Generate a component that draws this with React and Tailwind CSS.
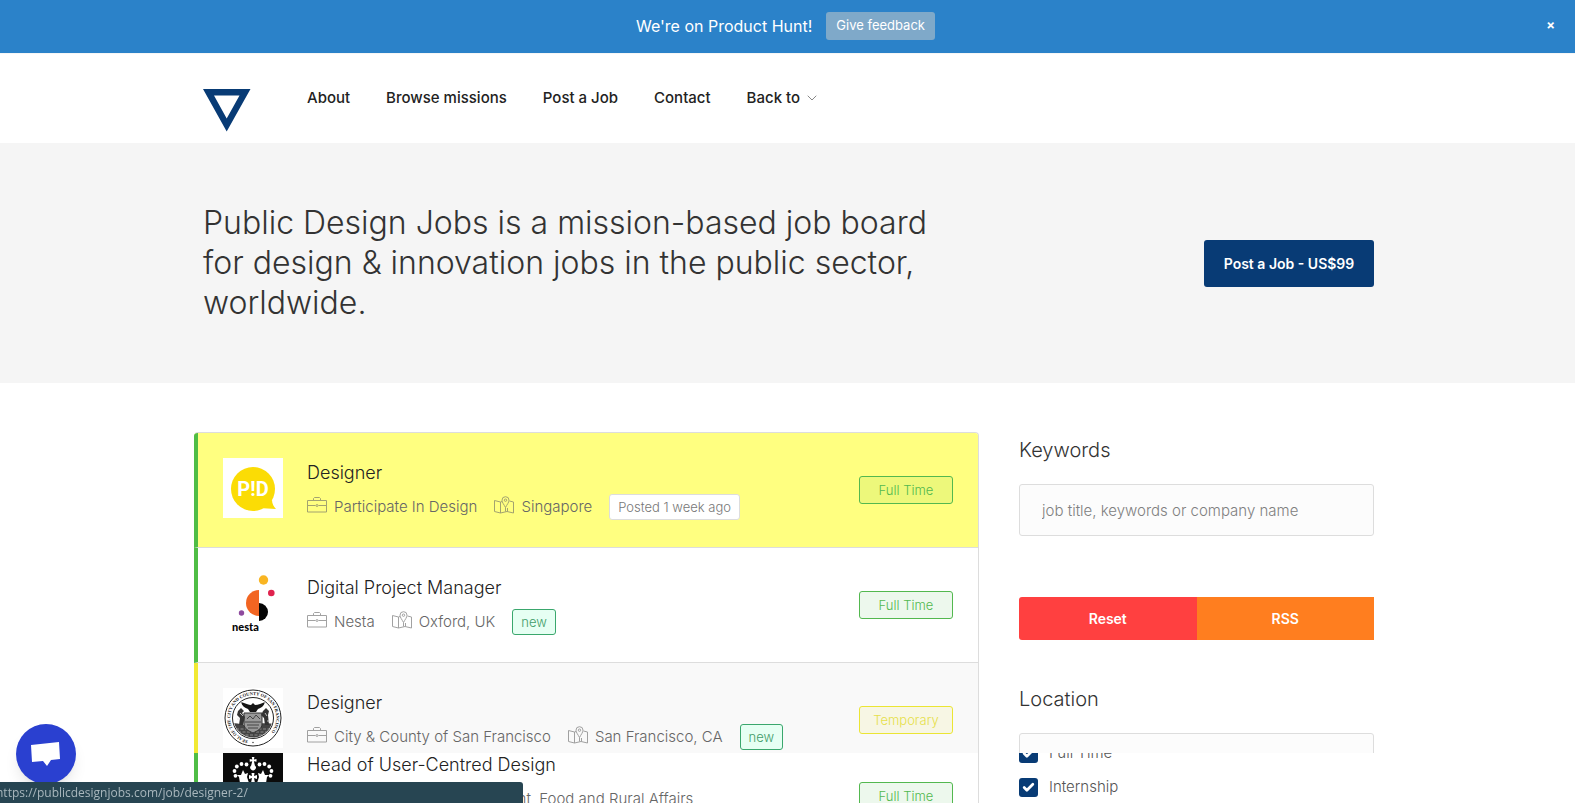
import { ChevronDown, Check } from 'lucide-react';

const navLinks = ['About', 'Browse missions', 'Post a Job', 'Contact'];

const BriefcaseIcon = () => (
    <svg width="20" height="16" viewBox="0 0 20 16" fill="none" stroke="currentColor" className="mb-1 shrink-0 opacity-60">
        <path d="M.5 3.5h19v11.500h-19z" />
        <path d="M6.500 3.500v-2l1-1h5l1 1v2" />
        <path d="M.5 8.500h8M11.500 8.500h8" />
        <circle cx="10" cy="8.500" r="1" />
    </svg>
);

const MapIcon = () => (
    <svg width="20" height="18" viewBox="0 0 20 18" fill="none" stroke="currentColor" className="mb-1 shrink-0 opacity-60">
        <path d="M8 5.500 6.500 6 .5 4.500v11l6 1.500 6.500-1.500 6.500 1.500V6l-4-1" />
        <path d="M6.500 6v11M13.500 12v3.500M11.500 11.500v4" />
        <path d="M11.500 11.500C10 8.500 8 6.500 8 4.200a3.500 3.500 0 0 1 7 0c0 2.300-2 4.300-3.500 7.300z" />
        <circle cx="11.500" cy="4.200" r="1.200" />
    </svg>
);

const PidLogo = () => (
    <svg width="60" height="60" viewBox="0 0 60 60" className="shrink-0">
        <rect width="60" height="60" fill="#fff" />
        <circle cx="30" cy="31" r="22" fill="#fbdc05" />
        <path d="M36 50c6 0 11 1 17 1-2-2-4-5-4-9z" fill="#fbdc05" />
        <text x="30" y="38" textAnchor="middle" fontFamily="Roboto, sans-serif" fontWeight="700" fontSize="20" fill="#fff">P!D</text>
    </svg>
);

const NestaLogo = () => (
    <svg width="60" height="60" viewBox="0 0 60 60" className="shrink-0">
        <circle cx="40.500" cy="7" r="4.700" fill="#f9b522" />
        <circle cx="48.300" cy="20" r="3.300" fill="#e0234e" />
        <path d="M36 17a13 13 0 0 0 0 26z" fill="#f26522" />
        <path d="M36 30a9 9 0 0 1 0 18z" fill="#050505" />
        <circle cx="18.500" cy="40" r="2.700" fill="#8e4a9e" />
        <text x="9" y="58" fontFamily="Lato, sans-serif" fontWeight="900" fontSize="11" fill="#050505">nesta</text>
    </svg>
);

const SealLogo = () => (
    <svg width="60" height="60" viewBox="0 0 60 60" className="shrink-0">
        <defs>
            <path id="seal-ring" d="M25 52.400A23 23 0 1 1 30 53" />
            <clipPath id="seal-field">
                <circle cx="30" cy="30" r="19.500" />
            </clipPath>
        </defs>
        <rect width="60" height="60" fill="#fff" />
        <circle cx="30" cy="30" r="28" fill="none" stroke="#222" strokeWidth="1" />
        <circle cx="30" cy="30" r="20.500" fill="#fff" stroke="#222" strokeWidth="1" />
        <text fontFamily="'Liberation Serif', serif" fontWeight="700" fontSize="4.500" fill="#111">
            <textPath href="#seal-ring">SEAL OF THE CITY AND COUNTY OF SAN FRANCISCO</textPath>
        </text>
        <circle cx="30" cy="54.500" r=".7" fill="#222" />
        <g clipPath="url(#seal-field)">
            <path d="M8 36c6-2 9 1 14 1s14-3 30-1v16H8z" fill="#444" />
            <path d="M13 41h34M15 44h30M18 47h24" stroke="#aaa" strokeWidth=".7" strokeDasharray="3 1.500" />
            <path d="M21 25h18v11c0 5-5 7-9 9-4-2-9-4-9-9z" fill="#999" stroke="#333" />
            <path d="M22 34h16M24 37h12M25 40h10M24 31l3-3 3 3 3-4 4 4" stroke="#444" fill="none" />
            <path d="M18 14c4 1 8 3 10 3l2-2 2 2c3 0 7-2 10-3-1 4-4 6-7 7l-2 3h-6l-2-3c-3-1-6-3-7-7z" fill="#161616" />
            <path d="m15 23 3-3 3 3-2 2 3 4-2 8h-4l1-7-3-3zM40 23l3-3 3 3-1 4 1 10h-4l-1-7-3-3z" fill="#333" />
            <path d="M17 25l3 3M42 25l2 3M14 31h3M44 33h3" stroke="#ddd" strokeWidth=".8" />
        </g>
    </svg>
);

const CrownLogo = () => (
    <svg width="60" height="60" viewBox="0 0 60 60" className="shrink-0">
        <rect width="60" height="60" fill="#0b0b0b" />
        <g fill="#fff">
            <path d="M28.800 7h2.600l-.5 2.500 2.600-.4v2.600l-2.600-.4 1 4.200a2.800 2.800 0 1 1-3.700 0l1-4.200-2.500.4V9.100l2.600.4z" />
            <circle cx="23.500" cy="14.500" r="1.900" />
            <circle cx="18.500" cy="14" r="1.900" />
            <circle cx="13.800" cy="16.500" r="1.900" />
            <circle cx="11.500" cy="21" r="1.900" />
            <circle cx="12.500" cy="25.800" r="1.900" />
            <circle cx="36.500" cy="14.500" r="1.900" />
            <circle cx="41.500" cy="14" r="1.900" />
            <circle cx="46.200" cy="16.500" r="1.900" />
            <circle cx="48.500" cy="21" r="1.900" />
            <circle cx="47.500" cy="25.800" r="1.900" />
            <path d="m20 20 2 4 3-1-1 4 2 6h-9l-1-6-2-2 4 0zM40 20l-2 4-3-1 1 4-2 6h9l1-6 2-2-4 0zM28.500 23h3l-.5 3 3-1v4l-3-1 1 5h-4l1-5-3 1v-4l3 1z" />
            <path d="M14 35c10-3 22-3 32 0l-1 4c-10-3-20-3-30 0z" />
        </g>
    </svg>
);

const jobTypes = {
    'Full Time': 'border-[#53b84f] bg-[#53b84f]/10 text-[#53b84f]',
    'Temporary': 'border-[#ebe534] bg-[#ebe534]/10 text-[#e6e04a]',
};

const JobRow = ({ logo, title, company, location, type, posted, isNew, className = '' }) => (
    <a
        href="#"
        className={`flex items-start border-b border-l-4 border-b-[#dddddd] p-[25px] ${type === 'Temporary' ? 'border-l-[#f1e933]' : 'border-l-[#4fbd45]'} ${className}`}
    >
        {logo}
        <div className="ml-6 flex-1 pb-0.5">
            <h3 className="text-[18px] leading-[30px] font-light text-[#222222]">{title}</h3>
            <div className="mt-1.5 flex flex-wrap gap-x-[17px] gap-y-0.5 text-[15px] leading-[26px] font-light text-[#666666]">
                <span className="flex items-center gap-[7px]"><BriefcaseIcon />{company}</span>
                <span className="flex items-center gap-[7px]"><MapIcon />{location}</span>
                {posted && (
                    <span className="rounded-[3px] border border-[#dddddd] bg-white px-2 text-[13px] leading-6 text-[#777777]">{posted}</span>
                )}
                {isNew && (
                    <span className="rounded-[3px] border border-[#3aa76d] bg-[#e6fff3] px-2 text-[13px] leading-6 text-[#3f9c68]">new</span>
                )}
            </div>
        </div>
        <span className={`w-[94px] shrink-0 self-center rounded-[3px] border text-center text-[13px] leading-[26px] font-light ${jobTypes[type]}`}>
            {type}
        </span>
    </a>
);

const TypeFilter = ({ id, label }) => (
    <div className="flex h-[19px] items-center gap-[11px]">
        <span className="relative block size-[19px]">
            <input id={id} type="checkbox" defaultChecked className="block size-[19px] appearance-none rounded-[3px] bg-[#083b75]" />
            <Check size={13} strokeWidth={5} className="pointer-events-none absolute top-[3px] left-[3px] text-white" />
        </span>
        <label htmlFor={id} className="text-[15px] font-light text-[#555555]">{label}</label>
    </div>
);

const App = () => {
    return (
        <div className="h-screen overflow-hidden bg-white font-['Inter',sans-serif] text-[#333333]">

            {/* Announcement bar */}
            <div className="relative flex h-[53px] items-center justify-center gap-3.5 bg-[#2b82c9] pr-1 pb-0.5">
                <span className="text-[16px] text-white">We're on Product Hunt!</span>
                <button className="h-7 rounded-[3px] bg-[#7fa9c9] px-2.5 text-[13px] text-white">Give feedback</button>
                <button aria-label="Close" className="absolute top-[15px] right-5 text-[13px] leading-5 font-bold text-white">×</button>
            </div>

            {/* Header */}
            <header className="h-[90px] border-t border-[#f6f6f6]">
                <div className="mx-auto flex max-w-[1187px] items-start pl-[9px]">
                    <a href="#" aria-label="Home" className="mt-[35px]">
                        <svg width="48" height="43" viewBox="0 0 48 43">
                            <path d="M0 0h47.500L23.700 42.500zM11 6.500l12.700 23L36.500 6.500z" fill="#083b75" fillRule="evenodd" />
                        </svg>
                    </a>
                    <nav className="mt-[34px] ml-14 flex gap-9 text-[15px] leading-5 font-medium text-[#222222]">
                        {navLinks.map((link) => <a key={link} href="#">{link}</a>)}
                        <a href="#" className="flex items-center gap-1">
                            Back to
                            <ChevronDown size={16} strokeWidth={1.5} className="text-[#888888]" />
                        </a>
                    </nav>
                </div>
            </header>

            {/* Hero */}
            <section className="bg-[#f5f5f5] py-[60px]">
                <div className="mx-auto flex max-w-[1187px] items-center justify-between pr-[7px] pl-[9px]">
                    <h1 className="max-w-[760px] text-[32px] leading-10 font-light text-[#333333]">
                        Public Design Jobs is a mission-based job board<br />
                        for design &amp; innovation jobs in the public sector,<br />
                        worldwide.
                    </h1>
                    <a href="#" className="w-[170px] rounded-[3px] bg-[#083b75] text-center text-[14px] leading-[47px] font-semibold text-white">Post a Job - US$99</a>
                </div>
            </section>

            <main className="mx-auto flex max-w-[1187px] gap-10 pt-[49px] pr-[7px]">

                {/* Job list */}
                <div className="flex-1 overflow-hidden rounded-[4px] border-t border-r border-[#dddddd]">
                    <JobRow logo={<PidLogo />} title="Designer" company="Participate In Design" location="Singapore" type="Full Time" posted="Posted 1 week ago" className="bg-[#ffff80]" />
                    <JobRow logo={<NestaLogo />} title="Digital Project Manager" company="Nesta" location="Oxford, UK" type="Full Time" isNew />
                    <div className="h-[90px] overflow-hidden">
                        <JobRow logo={<SealLogo />} title="Designer" company="City & County of San Francisco" location="San Francisco, CA" type="Temporary" isNew className="bg-[#f9f9f9]" />
                    </div>
                    <div className="overflow-hidden">
                        <JobRow logo={<CrownLogo />} title="Head of User-Centred Design" company="Department for Environment, Food and Rural Affairs" location="London, Bristol, Newcastle or York, UK" type="Full Time" className="-mt-7" />
                    </div>
                </div>

                {/* Filters */}
                <aside className="w-[355px] shrink-0">
                    <div className="h-[321px] overflow-hidden">
                        <label htmlFor="keywords" className="block text-[20px] leading-9 font-light text-[#333333]">Keywords</label>
                        <input id="keywords" type="text" placeholder="job title, keywords or company name" className="mt-4 block h-[52px] w-full rounded-[3px] border border-[#dddddd] bg-[#fcfcfc] px-[22px] text-[15px] font-light placeholder:text-[#808080]" />
                        <div className="mt-[61px] flex text-[14px] font-semibold text-white">
                            <button className="h-[43px] flex-1 rounded-l-[3px] bg-[#ff4040]">Reset</button>
                            <button className="h-[43px] flex-1 bg-[#ff7e1f]">RSS</button>
                        </div>
                        <label htmlFor="location" className="mt-[41px] block text-[20px] leading-9 font-light text-[#333333]">Location</label>
                        <input id="location" type="text" className="mt-4 block h-[52px] w-full rounded-[3px] border border-[#dddddd] bg-[#fcfcfc] px-[22px] text-[15px]" />
                    </div>
                    <div className="overflow-hidden">
                        <div className="-mt-[9px] flex flex-col gap-[15px]">
                            <TypeFilter id="full-time" label="Full Time" />
                            <TypeFilter id="internship" label="Internship" />
                        </div>
                    </div>
                </aside>
            </main>

            {/* Chat launcher */}
            <button aria-label="Open chat" className="fixed bottom-[19px] left-4 flex size-[60px] items-center justify-center rounded-full bg-[#2a40d0] shadow-lg">
                <svg width="30" height="26" viewBox="0 0 30 26" fill="#fff">
                    <path d="M0 4 28 1l1 17-9 1-4 6-4-5-11 1z" />
                </svg>
            </button>

            {/* Link status */}
            <div className="fixed bottom-0 left-0 h-[21px] w-[523px] overflow-hidden rounded-tr-[3px] bg-[#274552]">
                <span className="-ml-1 block font-['Open_Sans',sans-serif] text-[12px] leading-[21px] text-[#a9b7bd]">https://publicdesignjobs.com/job/designer-2/</span>
            </div>
        </div>
    );
};

export default App;
